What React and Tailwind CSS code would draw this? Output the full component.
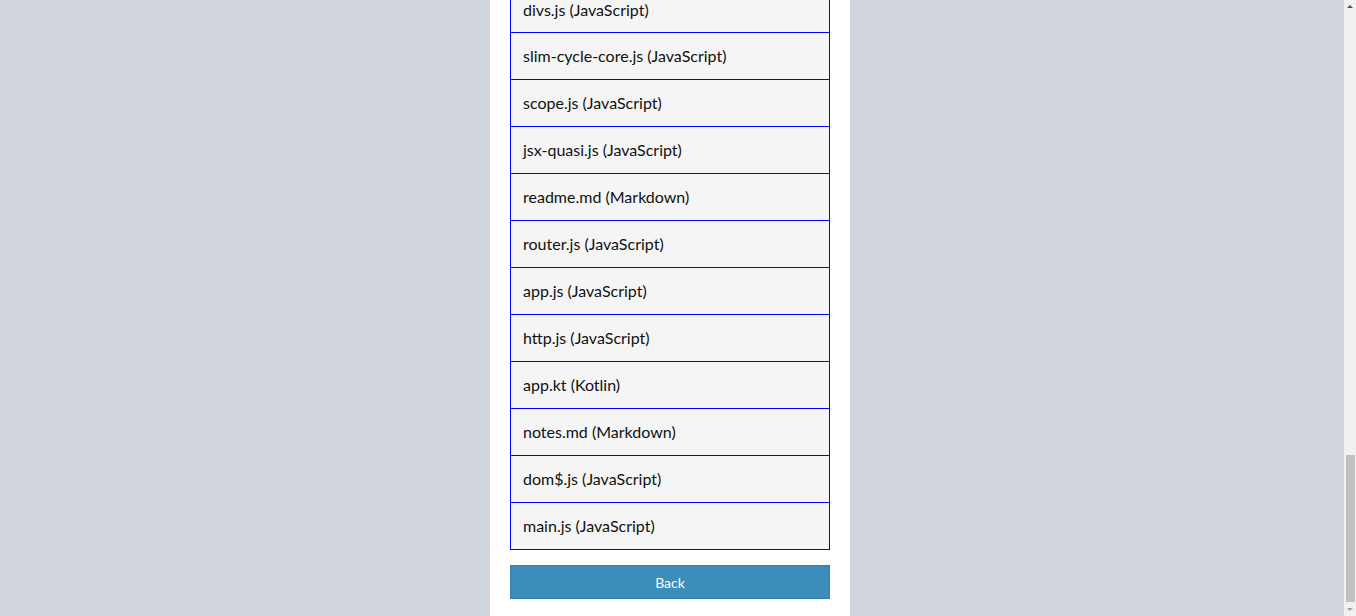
const files = [
    { name: 'divs.js', lang: 'JavaScript' },
    { name: 'slim-cycle-core.js', lang: 'JavaScript' },
    { name: 'scope.js', lang: 'JavaScript' },
    { name: 'jsx-quasi.js', lang: 'JavaScript' },
    { name: 'readme.md', lang: 'Markdown' },
    { name: 'router.js', lang: 'JavaScript' },
    { name: 'app.js', lang: 'JavaScript' },
    { name: 'http.js', lang: 'JavaScript' },
    { name: 'app.kt', lang: 'Kotlin' },
    { name: 'notes.md', lang: 'Markdown' },
    { name: 'dom$.js', lang: 'JavaScript' },
    { name: 'main.js', lang: 'JavaScript' },
];

const App = () => {
    return (
        <div className="flex h-[616px] w-full overflow-hidden bg-[#d2d6de] font-['Lato','Noto_Sans',sans-serif]">
            {/* Page, scrolled to the bottom */}
            <main className="flex-1 flex flex-col justify-end overflow-hidden pr-[4px]">
                <div className="w-[360px] mx-auto bg-white px-5 pb-[17px]">
                    <ul className="flex flex-col">
                        {files.map((file, i) => (
                            <li
                                key={file.name}
                                className={`h-[47px] flex items-center px-3 bg-[#f5f5f5] border-x border-b border-[#0000ff] text-[16px] text-[#111] ${i === 0 ? 'border-t' : ''}`}
                            >
                                {file.name} ({file.lang})
                            </li>
                        ))}
                    </ul>
                    <button className="mt-[15px] w-full h-[34px] bg-[#3c8dbc] border border-[#367fa9] text-white text-[14px]">
                        Back
                    </button>
                </div>
            </main>

            {/* Browser scrollbar */}
            <div className="w-[12px] h-full bg-[#f1f1f1] flex flex-col items-center">
                <div className="h-[12px] w-full flex items-center justify-center">
                    <div className="w-0 h-0 border-x-[3px] border-x-transparent border-b-[3px] border-b-[#505050]" />
                </div>
                <div className="flex-1 w-full flex flex-col justify-end pl-[2px] pr-[1px]">
                    <div className="h-[147px] w-full bg-[#c1c1c1]" />
                </div>
                <div className="h-[14px] w-full flex items-center justify-center">
                    <div className="w-0 h-0 border-x-[3px] border-x-transparent border-t-[3px] border-t-[#a3a3a3]" />
                </div>
            </div>
        </div>
    );
};

export default App;
